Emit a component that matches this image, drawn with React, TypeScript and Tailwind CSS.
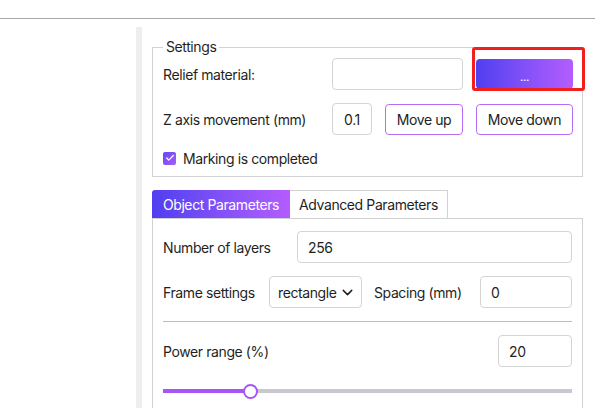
import React from 'react';
import { ChevronDown, Check } from 'lucide-react';

const font = { fontFamily: 'Inter, "Noto Sans", sans-serif' };

const TextBox: React.FC<{ value?: string; className?: string }> = ({ value = '', className = '' }) => (
  <div className={`h-[32px] border border-[#d4d4d4] rounded-[4px] bg-white flex items-center px-[10px] ${className}`}>
    {value}
  </div>
);

const OutlineButton: React.FC<{ label: string; className?: string }> = ({ label, className = '' }) => (
  <button className={`h-[31px] border border-[#b76cf6] rounded-[4px] bg-white text-[#222] flex items-center justify-center ${className}`}>
    {label}
  </button>
);

export default function App() {
  return (
    <div className="w-[595px] h-[408px] bg-white overflow-hidden text-[14px] tracking-[-0.4px] text-[#1f1f1f]" style={font}>
      {/* top bar */}
      <div className="h-[19px] border-b border-[#a8a8a8]" />

      <div className="flex mt-[8px] h-[400px]">
        <div className="w-[136px]" />
        <div className="w-[6px] bg-[#eeeeee]" />

        <div className="pl-[10px] pt-[10px] w-[441px]">
          {/* Settings group */}
          <fieldset className="border border-[#d2d2d2] pl-[10px] pr-[9px] pb-[8px] flex flex-col gap-[13px]">
            <legend className="px-[3px] leading-[20px]">Settings</legend>

            <div className="flex items-center h-[32px] mt-[1px]">
              <span className="flex-1">Relief material:</span>
              <TextBox className="w-[131px]" />
              <div className="relative ml-[13px]">
                <button className="w-[97px] h-[30px] rounded-[4px] bg-gradient-to-r from-[#4f3ef0] to-[#b45cff] text-white text-[12px] leading-none pt-[5px]">
                  ...
                </button>
                <div className="absolute -left-[4px] -right-[12px] -top-[12px] -bottom-[2px] border-[3px] border-[#f2201c] rounded-[3px] pointer-events-none" />
              </div>
            </div>

            <div className="flex items-center h-[32px]">
              <span className="flex-1">Z axis movement (mm)</span>
              <TextBox value="0.1" className="w-[40px] justify-center px-0" />
              <OutlineButton label="Move up" className="w-[78px] ml-[13px]" />
              <OutlineButton label="Move down" className="w-[97px] ml-[13px]" />
            </div>

            <div className="flex items-center h-[20px] gap-[7px]">
              <span className="w-[13px] h-[13px] rounded-[2px] bg-gradient-to-br from-[#6a44f5] to-[#a65cf9] flex items-center justify-center">
                <Check size={10} strokeWidth={3} color="white" />
              </span>
              <span>Marking is completed</span>
            </div>
          </fieldset>

          {/* Tabs */}
          <div className="mt-[13px] flex h-[28px]">
            <div className="w-[138px] rounded-tl-[3px] bg-gradient-to-r from-[#4f3ef0] to-[#b45cff] text-white flex items-center justify-center">
              Object Parameters
            </div>
            <div className="w-[158px] border-t border-r border-[#d2d2d2] flex items-center justify-center">
              Advanced Parameters
            </div>
          </div>

          <div className="border border-[#d2d2d2] pl-[10px] pr-[10px] pt-[12px] h-[200px] flex flex-col">
            <div className="flex items-center h-[32px]">
              <span className="w-[134px]">Number of layers</span>
              <TextBox value="256" className="flex-1" />
            </div>

            <div className="flex items-center h-[32px] mt-[13px]">
              <span className="w-[106px]">Frame settings</span>
              <div className="w-[93px] h-[32px] border border-[#d4d4d4] rounded-[4px] flex items-center justify-between pl-[8px] pr-[5px]">
                <span>rectangle</span>
                <ChevronDown size={17} strokeWidth={2} />
              </div>
              <span className="ml-[12px] flex-1">Spacing (mm)</span>
              <TextBox value="0" className="w-[92px]" />
            </div>

            <div className="h-px bg-[#bdbdbd] mt-[13px]" />

            <div className="flex items-center h-[32px] mt-[13px]">
              <span className="flex-1">Power range (%)</span>
              <TextBox value="20" className="w-[74px]" />
            </div>

            <div className="relative h-[16px] mt-[16px] flex items-center">
              <div className="w-full h-[4px] bg-[#c9c8cf] flex">
                <div className="w-[87px] h-full bg-[#a855f7]" />
              </div>
              <div className="absolute left-[80px] top-[1px] w-[15px] h-[15px] rounded-full bg-white border-2 border-[#a855f7]" />
            </div>
          </div>
        </div>
      </div>
    </div>
  );
}
